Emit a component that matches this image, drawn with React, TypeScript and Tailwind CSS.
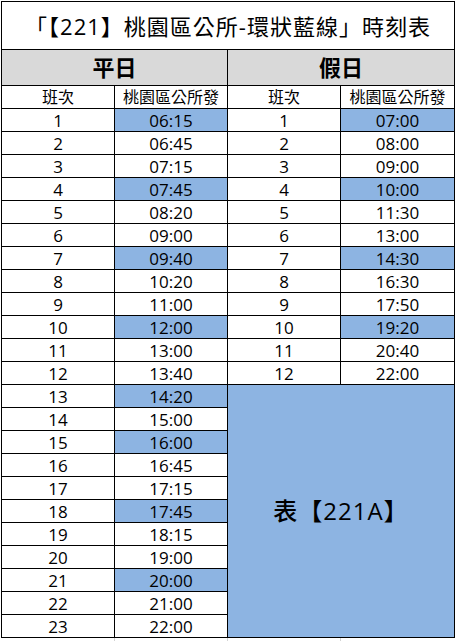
import React from 'react';

const weekday = [
  '06:15', '06:45', '07:15', '07:45', '08:20', '09:00', '09:40', '10:20', '11:00', '12:00', '13:00', '13:40',
  '14:20', '15:00', '16:00', '16:45', '17:15', '17:45', '18:15', '19:00', '20:00', '21:00', '22:00',
];
const weekdayBlue = [1, 4, 7, 10, 13, 15, 18, 21];

const holiday = ['07:00', '08:00', '09:00', '10:00', '11:30', '13:00', '14:30', '16:30', '17:50', '19:20', '20:40', '22:00'];
const holidayBlue = [1, 4, 7, 10];

const font = { fontFamily: '"Open Sans", "Noto Sans CJK TC", sans-serif' };

function Cell({ children, blue }: { children: React.ReactNode; blue?: boolean }) {
  return (
    <div
      className={`h-[22px] flex items-center justify-center text-[17px] leading-none text-black ${
        blue ? 'bg-[#8db4e2]' : 'bg-white'
      }`}
    >
      {children}
    </div>
  );
}

export default function App() {
  const cells: React.ReactNode[] = [];
  weekday.forEach((t, i) => {
    const n = i + 1;
    cells.push(<Cell key={`wn${n}`}>{n}</Cell>);
    cells.push(
      <Cell key={`wt${n}`} blue={weekdayBlue.includes(n)}>
        {t}
      </Cell>
    );
    if (n <= 12) {
      cells.push(<Cell key={`hn${n}`}>{n}</Cell>);
      cells.push(
        <Cell key={`ht${n}`} blue={holidayBlue.includes(n)}>
          {holiday[i]}
        </Cell>
      );
    }
    if (n === 13) {
      // merged block on the holiday side
      cells.push(
        <div
          key="merged"
          className="col-span-2 row-span-11 bg-[#8db4e2] flex items-center justify-center text-[24px] tracking-[1px] font-medium text-black"
        >
          表【221A】
        </div>
      );
    }
  });

  return (
    <div className="w-[457px] h-[641px] bg-white pt-px pl-px" style={font}>
      <div className="grid w-[454px] grid-cols-[112px_112px_112px_113px] gap-px bg-black p-px">
        <div className="col-span-4 h-[47px] bg-white flex items-center justify-center text-[22px] tracking-[1px] text-black pt-[2px]">
          「【221】桃園區公所-環狀藍線」時刻表
        </div>
        <div className="col-span-2 h-[35px] bg-[#d9d9d9] flex items-center justify-center text-[22px] font-bold text-black">
          平日
        </div>
        <div className="col-span-2 h-[35px] bg-[#d9d9d9] flex items-center justify-center text-[22px] font-bold text-black">
          假日
        </div>
        {['班次', '桃園區公所發', '班次', '桃園區公所發'].map((h, i) => (
          <div key={i} className="h-[22px] bg-white flex items-center justify-center text-[16px] leading-none text-black">
            {h}
          </div>
        ))}
        {cells}
      </div>
      <div className="grid w-[454px] grid-cols-[112px_112px_112px_113px] gap-px h-[3px]">
        <div />
        <div className="border-l border-[#d4d4d4]" />
        <div className="border-l border-[#d4d4d4]" />
        <div className="border-l border-[#d4d4d4]" />
      </div>
    </div>
  );
}
